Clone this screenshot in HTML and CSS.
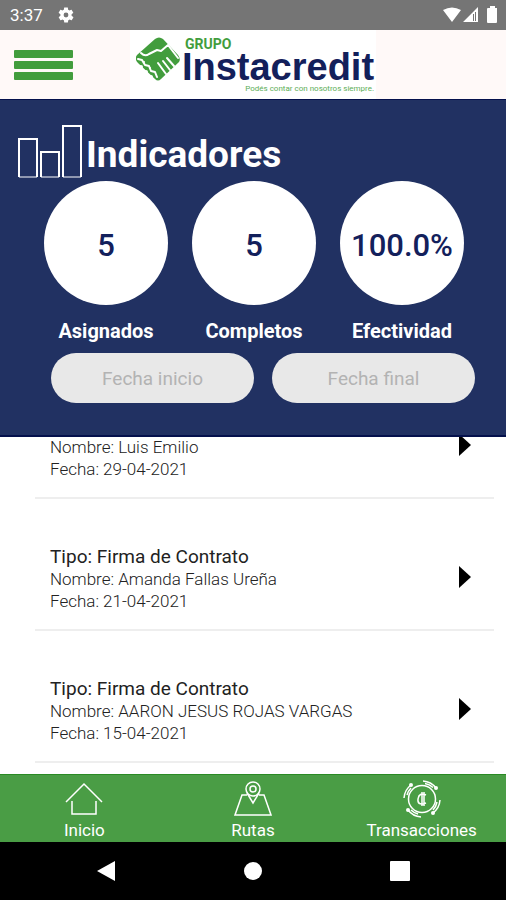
FILE: index.html
```html
<!DOCTYPE html>
<html lang="es">
<head>
  <meta charset="UTF-8" />
  <meta name="viewport" content="width=device-width, initial-scale=1.0"/>
  <title>Indicadores - Grupo Instacredit</title>
  <link rel="stylesheet" href="styles.css">
</head>
<body>
  <div class="status-bar">
    <span class="clock">3:37</span>
    <svg class="gear" viewBox="0 0 24 24" width="18" height="18" aria-hidden="true">
      <path fill="#fff" fill-rule="evenodd" d="M19.4 13c.1-.3.1-.7.1-1s0-.7-.1-1l2.1-1.600c.2-.2.3-.4.1-.7l-2-3.500c-.1-.2-.4-.3-.6-.2l-2.500 1c-.5-.4-1.100-.7-1.700-1L14.500 2.400c0-.2-.2-.4-.5-.4h-4c-.3 0-.5.2-.5.400L9.100 5c-.6.3-1.100.6-1.700 1l-2.500-1c-.2-.1-.5 0-.6.200l-2 3.500c-.1.2-.1.5.1.700L4.600 11c-.1.300-.1.700-.1 1s0 .7.100 1l-2.100 1.600c-.2.2-.3.4-.1.700l2 3.500c.1.200.4.300.6.200l2.500-1c.5.4 1.100.7 1.700 1l.4 2.600c0 .2.200.4.500.4h4c.3 0 .5-.2.500-.4l.4-2.600c.6-.3 1.100-.6 1.700-1l2.500 1c.2.1.5 0 .6-.2l2-3.500c.1-.2.100-.5-.1-.7zM12 15.200a3.200 3.200 0 1 1 0-6.400 3.200 3.200 0 0 1 0 6.400z"/>
    </svg>
    <svg class="signals" viewBox="0 0 56 18" width="56" height="18" aria-hidden="true">
      <path fill="#fff" d="M1 4Q10-1 19 4L10 16zM36 1v15H21z"/>
      <path fill="#757575" d="M31 8h1v7h-1zM33 6h1v9h-1z"/>
      <path fill="#fff" d="M46 2h2V0h5v2h2v14q0 1-1 1h-8q-1 0-1-1V3q0-1 1-1z"/>
    </svg>
  </div>

  <header class="header">
    <button type="button" class="menu-button" aria-label="Menú">
      <span></span>
      <span></span>
      <span></span>
    </button>
    <div class="logo">
      <svg viewBox="0 0 44 44" width="44" height="44" aria-hidden="true">
        <path fill="#429d3d" d="M19 2q4-3 8 0l15 16q3 4 1 7L25 42q-3 3-6 0L2 26q-4-4-1-8z"/>
        <g fill="none" stroke="#fff" stroke-linecap="round" stroke-linejoin="round">
          <path stroke-width="2" d="M5 16q4 4 8 1l8-4 4 1 7-6 10 13"/>
          <path stroke-width="2" d="M31 21l7 8M27 24l7 9M22 26l8 11"/>
          <path stroke-width="2" d="M2 22l4 1 3 5 4 1 2 5 4 1 2 5"/>
        </g>
        <g fill="#fff">
          <circle cx="5" cy="30" r="2"/>
          <circle cx="10" cy="35" r="2"/>
          <circle cx="15" cy="40" r="2"/>
          <circle cx="8" cy="25" r="1"/>
          <circle cx="14" cy="31" r="1"/>
        </g>
      </svg>
      <div class="logo-text">
        <span class="logo-group">GRUPO</span>
        <span class="logo-name">Instacredit</span>
        <span class="logo-slogan">Podés contar con nosotros siempre.</span>
      </div>
    </div>
  </header>

  <section class="indicators">
    <h1>
      <svg viewBox="0 0 64 54" width="64" height="54" fill="none" stroke="#fff" aria-hidden="true">
        <path stroke-width="2" d="M1 53V15h18v38M23 53V28h18v25M45 53V2h18v51"/>
        <path d="M1 53h18M23 53h18M45 53h18"/>
      </svg>
      Indicadores
    </h1>
    <div class="stats">
      <div class="stat">
        <div class="circle">5</div>
        <div class="stat-label">Asignados</div>
      </div>
      <div class="stat">
        <div class="circle">5</div>
        <div class="stat-label">Completos</div>
      </div>
      <div class="stat">
        <div class="circle">100.0%</div>
        <div class="stat-label">Efectividad</div>
      </div>
    </div>
    <form class="dates">
      <input type="text" placeholder="Fecha inicio" aria-label="Fecha inicio" />
      <input type="text" placeholder="Fecha final" aria-label="Fecha final" />
    </form>
  </section>

  <main class="list">
    <a class="item" href="#">
      <div class="item-text">
        <div class="item-type">Tipo: Firma de Contrato</div>
        <div>Nombre: Luis Emilio</div>
        <div>Fecha: 29-04-2021</div>
      </div>
      <svg viewBox="0 0 12 22" width="12" height="22" aria-hidden="true"><path d="M0 0l12 11L0 22z"/></svg>
    </a>
    <a class="item" href="#">
      <div class="item-text">
        <div class="item-type">Tipo: Firma de Contrato</div>
        <div>Nombre: Amanda Fallas Ureña</div>
        <div>Fecha: 21-04-2021</div>
      </div>
      <svg viewBox="0 0 12 22" width="12" height="22" aria-hidden="true"><path d="M0 0l12 11L0 22z"/></svg>
    </a>
    <a class="item" href="#">
      <div class="item-text">
        <div class="item-type">Tipo: Firma de Contrato</div>
        <div>Nombre: AARON JESUS ROJAS VARGAS</div>
        <div>Fecha: 15-04-2021</div>
      </div>
      <svg viewBox="0 0 12 22" width="12" height="22" aria-hidden="true"><path d="M0 0l12 11L0 22z"/></svg>
    </a>
  </main>

  <nav class="tabs">
    <a href="#">
      <svg viewBox="0 0 38 38" width="38" height="38" aria-hidden="true">
        <path d="M1 22L19 4l18 18M7 21v13h24V21"/>
      </svg>
      Inicio
    </a>
    <a href="#">
      <svg viewBox="0 0 38 38" width="38" height="38" aria-hidden="true">
        <path d="M13 15H8L1 35h36l-7-20h-5M13 13l6 10 6-10"/>
        <circle cx="19" cy="9" r="7"/>
        <circle cx="19" cy="9" r="3"/>
      </svg>
      Rutas
    </a>
    <a href="#">
      <svg viewBox="0 0 38 38" width="38" height="38" aria-hidden="true">
        <circle cx="19" cy="19" r="13.500"/>
        <path d="M8 5a18 18 0 0 0-7 13M20 1a18 18 0 0 1 13 7M37 20a18 18 0 0 1-7 13M18 37a18 18 0 0 1-13-7M8 8a16 16 0 0 0-4 7M22 3.500a16 16 0 0 1 8 4M34 22a16 16 0 0 1-4 8M15 34a16 16 0 0 1-7-4"/>
        <path d="M23 15q-7-3-8 4t8 4M19 12v14M21 12v14"/>
        <g fill="#fff" stroke="none"><circle cx="8" cy="5" r="2"/><circle cx="33" cy="8" r="2"/><circle cx="30" cy="33" r="2"/><circle cx="5" cy="30" r="2"/></g>
      </svg>
      Transacciones
    </a>
  </nav>

  <div class="system-nav">
    <button type="button" aria-label="Atrás">
      <svg viewBox="0 0 20 22" width="20" height="22"><path fill="#fff" d="M19 1v20L1 11z"/></svg>
    </button>
    <button type="button" aria-label="Pantalla principal">
      <svg viewBox="0 0 20 20" width="20" height="20"><circle fill="#fff" cx="10" cy="10" r="9"/></svg>
    </button>
    <button type="button" aria-label="Recientes">
      <svg viewBox="0 0 20 20" width="20" height="20"><rect fill="#fff" width="20" height="20" rx="1"/></svg>
    </button>
  </div>
</body>
</html>
```

FILE: styles.css
```css
* {
  box-sizing: border-box;
}
body {
  margin: 0;
  height: 100vh;
  display: flex;
  flex-direction: column;
  font-family: Roboto, "Liberation Sans", sans-serif;
  background: #fff;
}
a {
  color: inherit;
  text-decoration: none;
}
button {
  padding: 0;
  border: 0;
  background: none;
}
.status-bar {
  flex: none;
  display: flex;
  align-items: center;
  height: 30px;
  padding: 0 8px 0 10px;
  background: #757575;
  color: #fff;
  font-size: 17px;
}
.gear {
  margin-left: 14px;
}
.signals {
  margin-left: auto;
}
.header {
  flex: none;
  display: grid;
  grid-template-columns: 1fr auto 1fr;
  height: 69px;
  background: #fff9f8;
}
.menu-button {
  display: flex;
  flex-direction: column;
  justify-content: center;
  gap: 3px;
  width: 59px;
  margin-left: 14px;
}
.menu-button span {
  height: 8px;
  border-radius: 1px;
  background: #429d3d;
}
.logo {
  display: flex;
  gap: 2px;
  padding: 7px 2px 0 6px;
  background: #fff;
}
.logo-text {
  display: flex;
  flex-direction: column;
}
.logo-group {
  padding-left: 3px;
  font-size: 14px;
  font-weight: bold;
  line-height: 14px;
  color: #429d3d;
}
.logo-name {
  font-family: "Liberation Sans", Arial, sans-serif;
  font-size: 38px;
  font-weight: bold;
  line-height: 32px;
  color: #13205b;
}
.logo-slogan {
  font-size: 8px;
  line-height: 12px;
  text-align: right;
  color: #5dae58;
}
.indicators {
  flex: none;
  padding: 24px 0 32px;
  background: #213162;
  border-top: 1px solid #04104c;
  border-bottom: 2px solid #04104c;
  color: #fff;
}
h1 {
  display: flex;
  align-items: flex-end;
  gap: 4px;
  height: 54px;
  margin: 0 0 3px 18px;
  font-size: 37px;
  line-height: 46px;
}
.stats {
  display: flex;
  justify-content: center;
  gap: 24px;
  padding-left: 2px;
}
.circle {
  display: flex;
  align-items: center;
  justify-content: center;
  width: 124px;
  height: 124px;
  padding-top: 4px;
  border-radius: 50%;
  background: #fff;
  color: #13205b;
  font-size: 31px;
  font-weight: 500;
}
.stat-label {
  margin-top: 14px;
  font-size: 20px;
  font-weight: bold;
  line-height: 24px;
  text-align: center;
}
.dates {
  display: flex;
  gap: 18px;
  padding: 10px 31px 0 51px;
}
.dates input {
  flex: 1;
  min-width: 0;
  height: 50px;
  border: 0;
  border-radius: 25px;
  background: #e8e8e8;
  font-family: inherit;
  font-size: 19px;
  text-align: center;
}
.dates input::placeholder {
  color: #b3b3b3;
}
.list {
  flex: 1;
  min-height: 0;
  display: flex;
  flex-direction: column;
  justify-content: flex-end;
  padding: 0 12px 11px 35px;
  overflow: hidden;
}
.item {
  flex: none;
  display: flex;
  align-items: center;
  justify-content: space-between;
  height: 132px;
  padding: 25px 23px 0 15px;
  border-bottom: 2px solid #eee;
  color: #222;
  font-size: 17px;
  font-weight: 300;
  line-height: 22px;
}
.item-text {
  padding-top: 3px;
}
.item-type {
  font-size: 19px;
  font-weight: 400;
  line-height: 23px;
}
.tabs {
  flex: none;
  display: grid;
  grid-template-columns: repeat(3, 1fr);
  height: 68px;
  background: #4a9d45;
  border-top: 1px solid #2a8a24;
  color: #fff;
  font-size: 17px;
  line-height: 24px;
}
.tabs a {
  display: flex;
  flex-direction: column;
  align-items: center;
  padding-top: 5px;
}
.tabs svg {
  fill: none;
  stroke: #fff;
  stroke-width: 1.5;
}
.system-nav {
  flex: none;
  display: grid;
  grid-template-columns: repeat(3, 1fr);
  height: 58px;
  padding: 0 33px;
  background: #000;
}
.system-nav button {
  display: flex;
  align-items: center;
  justify-content: center;
}
```
